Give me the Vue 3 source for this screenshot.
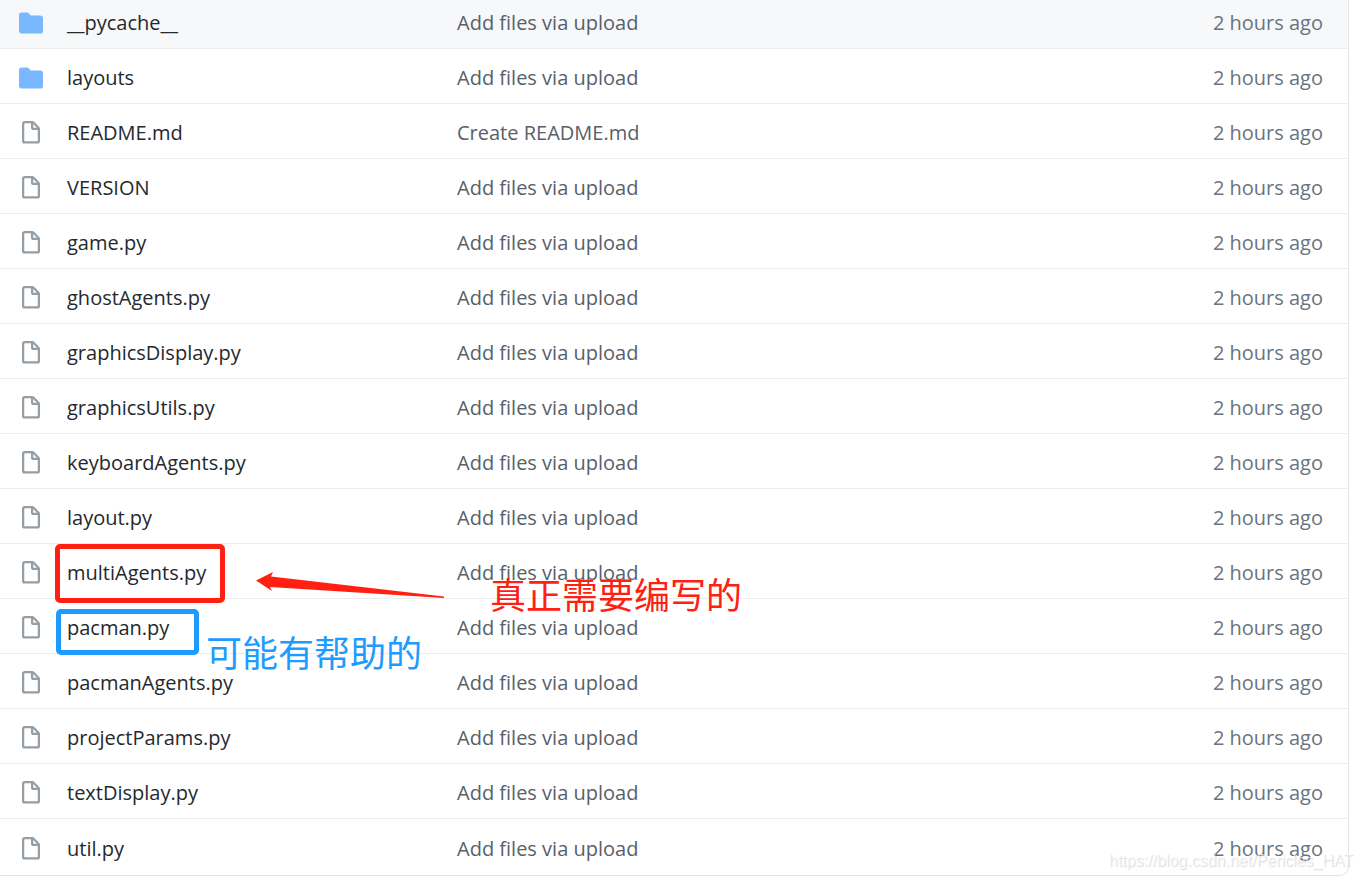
<template>
  <div class="page">
    <div class="file-box">
      <table class="files">
        <tbody>
          <tr v-for="file in files" :key="file.name">
            <td class="icon">
              <svg v-if="file.folder" class="folder" viewBox="0 0 16 16" aria-label="Directory">
                <path
                  d="M1.75 1A1.75 1.75 0 000 2.75v10.5C0 14.216.784 15 1.75 15h12.5A1.75 1.75 0 0016 13.25v-8.5A1.75 1.75 0 0014.25 3h-6.5a.25.25 0 01-.2-.1l-.9-1.2c-.33-.44-.85-.7-1.4-.7h-3.5z"
                />
              </svg>
              <svg v-else class="file" viewBox="0 0 16 16" aria-label="File">
                <path
                  fill-rule="evenodd"
                  d="M3.75 1.5a.25.25 0 00-.25.25v11.5c0 .138.112.25.25.25h8.5a.25.25 0 00.25-.25V6H9.75A1.75 1.75 0 018 4.25V1.5H3.75zm5.75.56v2.19c0 .138.112.25.25.25h2.19L9.5 2.06zM2 1.75C2 .784 2.784 0 3.75 0h5.086c.464 0 .909.184 1.237.513l3.414 3.414c.329.328.513.773.513 1.237v8.086A1.75 1.75 0 0112.25 15h-8.5A1.75 1.75 0 012 13.25V1.75z"
                />
              </svg>
            </td>
            <td class="name">
              <a href="#">{{ file.name }}</a>
            </td>
            <td class="message">
              <a href="#">{{ file.message || 'Add files via upload' }}</a>
            </td>
            <td class="age">2 hours ago</td>
          </tr>
        </tbody>
      </table>
    </div>

    <!-- Annotations -->
    <div class="mark mark-red"></div>
    <div class="mark mark-blue"></div>
    <svg class="arrow" viewBox="0 0 190 30">
      <path d="M0 10.5L17 2L15 6.5L188 26.500V28L14 17L16 21Z" />
    </svg>
    <span class="note note-red">真正需要编写的</span>
    <span class="note note-blue">可能有帮助的</span>
    <span class="watermark">https://blog.csdn.net/Pericles_HAT</span>
  </div>
</template>

<script setup>
const files = [
  { name: '__pycache__', folder: true },
  { name: 'layouts', folder: true },
  { name: 'README.md', message: 'Create README.md' },
  { name: 'VERSION' },
  { name: 'game.py' },
  { name: 'ghostAgents.py' },
  { name: 'graphicsDisplay.py' },
  { name: 'graphicsUtils.py' },
  { name: 'keyboardAgents.py' },
  { name: 'layout.py' },
  { name: 'multiAgents.py' },
  { name: 'pacman.py' },
  { name: 'pacmanAgents.py' },
  { name: 'projectParams.py' },
  { name: 'textDisplay.py' },
  { name: 'util.py' },
];
</script>

<style>
body {
  background: #fff;
}
</style>

<style scoped>
.page {
  position: relative;
  overflow: hidden;
  padding: 0 14px 3px 0;
  font-family: 'Segoe UI', 'Open Sans', 'Noto Sans CJK SC', sans-serif;
  font-size: 20px;
  line-height: 30px;
}

.file-box {
  border: 1px solid #e1e4e8;
  border-width: 0 1px 1px 0;
  border-radius: 0 0 9px 0;
}

.files {
  width: 100%;
  border-collapse: separate;
  border-spacing: 0;
  table-layout: fixed;
}

td {
  box-sizing: border-box;
  height: 55px;
  padding: 4px 0 0;
  border-bottom: 1px solid #eaecef;
  white-space: nowrap;
}

tr:first-child td {
  height: 49px;
  padding-top: 0;
  padding-bottom: 2px;
  background: #f6f8fa;
}

tr:last-child td {
  height: 56px;
  border-bottom: 0;
}

td.icon {
  width: 67px;
  padding-left: 19px;
}

.icon svg {
  display: block;
  width: 24px;
  height: 24px;
}

.folder {
  fill: #79b8ff;
}

.file {
  fill: #959da5;
}

.name {
  width: 390px;
}

.name a {
  color: #24292e;
}

.message a {
  color: #586069;
}

td.age {
  width: 180px;
  padding-right: 25px;
  color: #6a737d;
  text-align: right;
}

a {
  text-decoration: none;
}

.mark {
  position: absolute;
  box-sizing: border-box;
  border: 5px solid;
  border-radius: 5px;
}

.mark-red {
  left: 55px;
  top: 544px;
  width: 170px;
  height: 59px;
  border-color: #ff2012;
}

.mark-blue {
  left: 56px;
  top: 609px;
  width: 143px;
  height: 46px;
  border-color: #1e9bff;
}

.arrow {
  position: absolute;
  left: 256px;
  top: 570px;
  width: 190px;
  height: 30px;
  fill: #ff2012;
}

.note {
  position: absolute;
  font-family: 'Noto Sans CJK SC', sans-serif;
  font-size: 36px;
  line-height: 48px;
  font-weight: 400;
  white-space: nowrap;
}

.note-red {
  left: 490px;
  top: 569px;
  color: #ff2012;
}

.note-blue {
  left: 206px;
  top: 627px;
  color: #1e9bff;
}

.watermark {
  position: absolute;
  right: 10px;
  bottom: 6px;
  font-family: 'Liberation Sans', Arial, sans-serif;
  font-size: 16px;
  line-height: 24px;
  color: rgba(255, 255, 255, 0.6);
  text-shadow: 1px 1px 1px rgba(0, 0, 0, 0.15);
}
</style>
